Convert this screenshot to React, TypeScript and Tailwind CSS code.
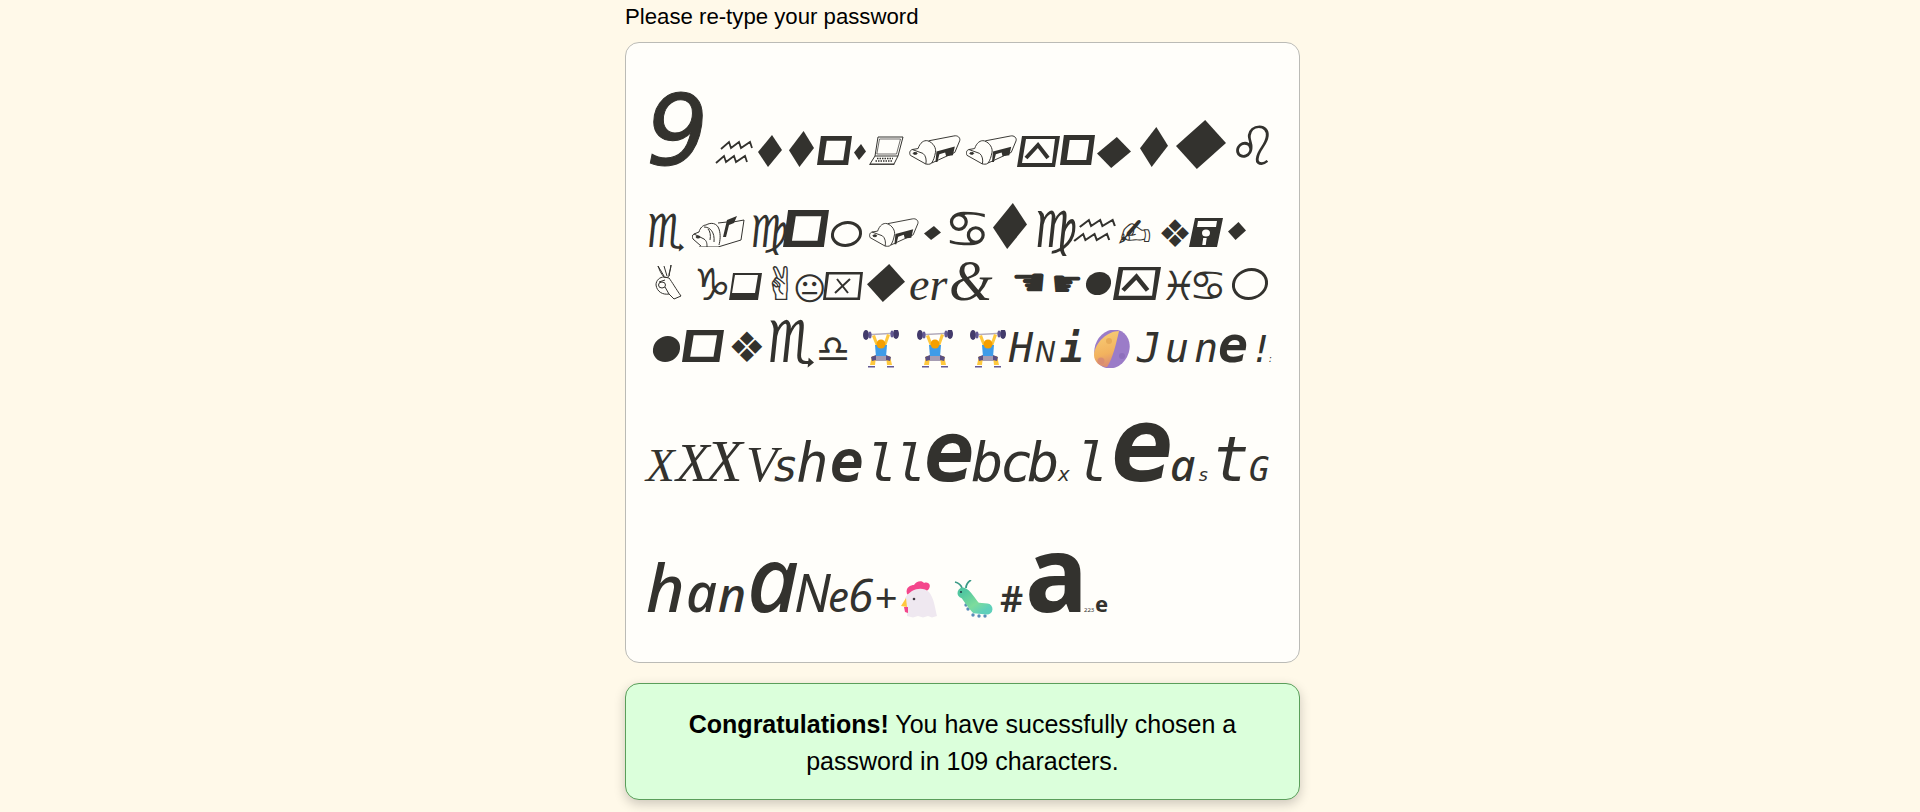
const INK = '#33322e';
const SYM = "font-['DejaVu_Sans']";
const MONO = "font-['DejaVu_Sans_Mono'] italic";
const NOTO = "font-['Noto_Sans'] italic";
const SERIF = "font-['Liberation_Serif'] italic";

type P = { className?: string; children?: React.ReactNode };

function Row({ className = '', children }: P) {
  return (
    <div className={`flex items-baseline ${className}`}>
      <span className="block w-0 h-full shrink-0" />
      {children}
    </div>
  );
}

function T({ className = '', children }: P) {
  return <span className={`block shrink-0 leading-none whitespace-pre ${className}`}>{children}</span>;
}

function Cell({ className = '', children }: P) {
  return <span className={`block shrink-0 leading-none ${className}`}>{children}</span>;
}

function Diamond({ className = '' }: P) {
  return (
    <svg viewBox="0 0 24 32" preserveAspectRatio="none" className={`inline-block align-baseline ${className}`}>
      <polygon points="14,0 24,15 10,32 0,17" fill={INK} />
    </svg>
  );
}

function Square({ className = '' }: P) {
  return (
    <svg viewBox="0 0 36 30" preserveAspectRatio="none" className={`inline-block align-baseline ${className}`}>
      <path fillRule="evenodd" fill={INK} d="M4 0H36L32 30H0ZM10 5L7 25H27L30 5Z" />
    </svg>
  );
}

function ShadowBox({ className = '' }: P) {
  return (
    <svg viewBox="0 0 33 27" preserveAspectRatio="none" className={`inline-block align-baseline ${className}`}>
      <path fillRule="evenodd" fill={INK} d="M4 0H33L29 27H0L1 21ZM6 2L3 20H26L29 2Z" />
    </svg>
  );
}

function XBox({ className = '' }: P) {
  return (
    <svg viewBox="0 0 40 28" preserveAspectRatio="none" className={`inline-block align-baseline ${className}`}>
      <path fillRule="evenodd" fill={INK} d="M3 0H40L37 28H0ZM6 2.500L3 25.500H34.500L37 2.500Z" />
      <path d="M14 7L25 21M27 7L12 21" stroke={INK} strokeWidth="2" fill="none" />
    </svg>
  );
}

function UpBox({ className = '' }: P) {
  return (
    <svg viewBox="0 0 43 31" preserveAspectRatio="none" className={`inline-block align-baseline ${className}`}>
      <path fillRule="evenodd" fill={INK} d="M5 0H43L38 31H0ZM9 3L5 27H35L38 3Z" />
      <path d="M9 22L21 9L31 22" fill="none" stroke={INK} strokeWidth="4" />
    </svg>
  );
}

function Aquarius({ className = '' }: P) {
  return (
    <svg viewBox="0 0 38 25" preserveAspectRatio="none" className={`inline-block align-baseline ${className}`} fill="none" stroke={INK} strokeWidth="1.800">
      <path d="M6 9L14 2L16 8L24 2L26 8L35 2L37 8" />
      <path d="M1 23L9 16L11 22L19 16L21 22L30 16L32 22" />
    </svg>
  );
}

function OkHand({ className = '' }: P) {
  return (
    <svg viewBox="0 0 27 35" className={`inline-block align-baseline ${className}`} fill="none" stroke={INK} strokeWidth="1">
      <path d="M3 1L9 11M9 1L12 11M16 0L14 11" />
      <path d="M3 1C4 4 6 9 9 12C12 13 15 12 14 9C15 5 16 3 16 0" />
      <path d="M1 20C1 15 5 12 9 12L14 13C17 17 21 24 26 31L19 34L14 29C8 30 2 27 1 20Z" />
      <ellipse cx="7" cy="20" rx="3.500" ry="3" />
      <path d="M10 22L14 29M4 17L10 15" />
    </svg>
  );
}

function Laptop({ className = '' }: P) {
  return (
    <svg viewBox="0 0 35 29" className={`inline-block align-baseline ${className}`} fill="none" stroke={INK} strokeWidth="1">
      <path d="M9 1H34L29 20H6Z" />
      <path d="M10.500 3H31.500L27.500 18H7.800Z" strokeWidth="0.700" />
      <path d="M6 20L1 28H25L29 20" />
      <path d="M0.700 28V28.700H25V28" />
      <path d="M8 22.500H24M6.500 25H23" strokeDasharray="1.500 1" strokeWidth="1.300" />
    </svg>
  );
}

function Mailbox({ className = '' }: P) {
  return (
    <svg viewBox="0 0 53 31" className={`inline-block align-baseline ${className}`} fill="none" stroke={INK} strokeWidth="1">
      <path d="M20 6L46 1C50 0 53 3 52 6L47 18L23 29" />
      <path d="M9 14C11 8 15 5 19 6C25 8 28 14 27 18C26 23 25 26 23 29C21 31 18 30 17 30" />
      <path d="M9 14L3 15C0 16 0 19 1 21L17 30" />
      <path d="M3 15L14 19C17 21 18 26 17 30" />
      <ellipse cx="6" cy="19" rx="2" ry="1" fill={INK} />
      <path d="M28 17L47 12L45 21L38 22L37 18L31 20L29 28L27 28Z" fill={INK} stroke="none" />
    </svg>
  );
}

function FlagMailbox({ className = '' }: P) {
  return (
    <svg viewBox="0 0 53 32" className={`inline-block align-baseline ${className}`} fill="none" stroke={INK} strokeWidth="1">
      <path d="M26 8L35 7M41 7L52 5L49 25L26 32H7" />
      <path d="M7 17C8 13 11 10 14 10C19 7 25 8 27 14C29 20 28 26 27 30" />
      <path d="M7 17L2 19C0 20 0 22 1 24L9 31" />
      <path d="M2 19L12 24C15 26 15 29 15 32" />
      <path d="M12 12C18 12 23 17 22 27M16 14C18 16 19 20 18 25" />
      <ellipse cx="6" cy="22" rx="2" ry="1" fill={INK} />
      <path d="M35 5L45 1L42 8L37 10L34 22L31 22Z" fill={INK} stroke="none" />
    </svg>
  );
}

function Floppy({ className = '' }: P) {
  return (
    <svg viewBox="0 0 34 29" className={`inline-block align-baseline ${className}`}>
      <path fillRule="evenodd" fill={INK} d="M6 0H34L28 29H0ZM9 3L8 9H27L28 3Z" />
      <ellipse cx="17" cy="15" rx="4" ry="3.500" fill="#fffefa" />
      <rect x="14" y="20" width="3.500" height="7" fill="#fffefa" transform="skewX(-8) translate(3 0)" />
    </svg>
  );
}

function Lifter({ className = '' }: P) {
  return (
    <svg viewBox="0 0 40 38" className={`inline-block align-baseline ${className}`}>
      <path d="M3 5L37 3" stroke="#b4acbc" strokeWidth="1.300" />
      <ellipse cx="5" cy="5" rx="3" ry="5" fill="#433b6b" />
      <ellipse cx="9" cy="5" rx="1.600" ry="3.500" fill="#635994" />
      <ellipse cx="35" cy="4" rx="3" ry="5" fill="#433b6b" />
      <ellipse cx="31" cy="4" rx="1.600" ry="3.500" fill="#635994" />
      <path d="M11 6L15 16L18 16L14 5ZM29 5L25 16L22 16L26 4Z" fill="#ffc83d" />
      <path d="M14 15H26L25 27H15Z" fill="#3f9ce8" />
      <circle cx="20" cy="14" r="4.500" fill="#f59f00" />
      <path d="M15 26H25L28 31H12Z" fill="#a69db3" />
      <path d="M11 26L15 26L14 35H9ZM29 26L25 26L26 35H31Z" fill="#ffc83d" />
      <path d="M10 27L15 25L15 30L11 31ZM30 27L25 25L25 30L29 31Z" fill="#5a4f82" />
      <path d="M7 36H14V37.500H7ZM26 36H33V37.500H26Z" fill="#635994" />
    </svg>
  );
}

function Moon({ className = '' }: P) {
  return (
    <svg viewBox="0 0 40 38" className={`inline-block align-baseline ${className}`}>
      <defs>
        <linearGradient id="moonGold" x1="0" y1="0" x2="0.200" y2="1">
          <stop offset="0" stopColor="#f8d078" />
          <stop offset="0.700" stopColor="#f2b25e" />
          <stop offset="1" stopColor="#dc8f72" />
        </linearGradient>
      </defs>
      <ellipse cx="20" cy="19" rx="17" ry="20" transform="rotate(28 20 19)" fill="#9b7cc8" />
      <path d="M27 1C16 1 3 12 2 25C2 32 8 37 15 37C21 28 24 14 27 1Z" fill="url(#moonGold)" />
      <circle cx="17" cy="11" r="3" fill="#e7ab58" />
      <circle cx="9" cy="31" r="3.500" fill="#d98d72" />
      <circle cx="30" cy="26" r="3" fill="#8e6fbc" />
    </svg>
  );
}

function Chicken({ className = '' }: P) {
  return (
    <svg viewBox="0 0 37 38" className={`inline-block align-baseline ${className}`}>
      <path d="M6 14C4 7 10 5 13 5C15 1 21 0 23 3C28 1 31 6 27 10L12 18Z" fill="#f4478c" />
      <path d="M4 18C10 8 22 6 28 12C33 18 34 28 36 36L31 37.500L27 36L22 37.500L17 36L12 37.500L6 36C6 30 5 24 4 18Z" fill="#efe8f0" />
      <path d="M5 18L0 26L6 27Z" fill="#ffc83d" />
      <path d="M3 27L7 27L7 33L4 32Z" fill="#f4478c" />
      <circle cx="13" cy="19" r="1.300" fill="#433b45" />
    </svg>
  );
}

function Caterpillar({ className = '' }: P) {
  return (
    <svg viewBox="0 0 39 38" className={`inline-block align-baseline ${className}`}>
      <defs>
        <linearGradient id="catBody" x1="0" y1="0" x2="1" y2="1">
          <stop offset="0" stopColor="#52c7a0" />
          <stop offset="0.600" stopColor="#7ddc9c" />
          <stop offset="1" stopColor="#5fd0ba" />
        </linearGradient>
      </defs>
      <path d="M1 2C5 3 7 5 8 8M17 0C14 2 12 5 12 8" stroke="#3a9a86" strokeWidth="1.800" fill="none" />
      <g fill="#5a8db8">
        <circle cx="12" cy="25" r="1.700" />
        <circle cx="14" cy="29" r="1.700" />
        <circle cx="19" cy="35" r="1.700" />
        <circle cx="25" cy="36" r="1.700" />
        <circle cx="31" cy="36" r="1.700" />
      </g>
      <path d="M9 13C13 14 16 22 22 28L33 29" stroke="url(#catBody)" strokeWidth="11" strokeLinecap="round" fill="none" />
      <circle cx="7" cy="12" r="1.100" fill="#24424a" />
    </svg>
  );
}

export default function App() {
  return (
    <div className={`min-h-screen bg-[#fff9e9] font-['Liberation_Sans',sans-serif] text-black`}>
      <div className="ml-[625px] w-[675px]">
        <div className="pt-[4px] h-[42px] text-[22.200px] leading-[26px]">Please re-type your password</div>

        <div className={`h-[621px] rounded-[14px] border border-[#bbbbb6] bg-[#fffefa] pl-[20px] text-[#33322e] ${SYM}`}>
          {/* row 1 */}
          <Row className="h-[122px]">
            <T className="w-[69px] text-[98px] italic [-webkit-text-stroke:1px_#33322e]">9</T>
            <Cell className="w-[43px]"><Aquarius className="w-[38px] h-[25px]" /></Cell>
            <Cell className="w-[31px]"><Diamond className="w-[24px] h-[32px] mb-[-2px]" /></Cell>
            <Cell className="w-[28px]"><Diamond className="w-[25px] h-[36px] mb-[-2px]" /></Cell>
            <Cell className="w-[37px]"><Square className="w-[35px] h-[29px]" /></Cell>
            <Cell className="w-[15px]"><Diamond className="w-[12px] h-[16px] mb-[5px]" /></Cell>
            <Cell className="w-[39px]"><Laptop className="w-[35px] h-[29px]" /></Cell>
            <Cell className="w-[58px]"><Mailbox className="w-[54px] h-[30px]" /></Cell>
            <Cell className="w-[51px]"><Mailbox className="w-[51px] h-[30px]" /></Cell>
            <Cell className="w-[43px]"><UpBox className="w-[43px] h-[31px] mb-[-2px]" /></Cell>
            <Cell className="w-[37px]"><Square className="w-[35px] h-[30px]" /></Cell>
            <Cell className="w-[43px]"><Diamond className="w-[34px] h-[31px] mb-[-3px]" /></Cell>
            <Cell className="w-[36px]"><Diamond className="w-[28px] h-[40px] mb-[-2px]" /></Cell>
            <Cell className="w-[53px]"><Diamond className="w-[50px] h-[49px] mb-[-4px]" /></Cell>
            <T className="text-[54px] -skew-x-6">♌</T>
          </Row>

          {/* row 2 */}
          <Row className="h-[82px]">
            <T className="w-[46px] text-[46px] font-bold -skew-x-6">♏</T>
            <Cell className="w-[57px]"><FlagMailbox className="w-[53px] h-[32px]" /></Cell>
            <T className="w-[34px] text-[44px] -skew-x-6">♍</T>
            <Cell className="w-[48px]"><Square className="w-[46px] h-[37px]" /></Cell>
            <Cell className="w-[37px]">
              <span className="inline-block w-[31px] h-[26px] rounded-[50%] border-[3px] border-[#33322e] -skew-x-6" />
            </Cell>
            <Cell className="w-[56px]"><Mailbox className="w-[52px] h-[29px]" /></Cell>
            <Cell className="w-[20px]"><Diamond className="w-[17px] h-[14px] mb-[7px]" /></Cell>
            <T className="w-[49px] text-[52px]">♋</T>
            <Cell className="w-[40px]"><Diamond className="w-[34px] h-[46px] mb-[-2px]" /></Cell>
            <T className="w-[40px] text-[50px] -skew-x-6">♍</T>
            <Cell className="w-[45px]"><Aquarius className="w-[43px] h-[25px] mb-[4px]" /></Cell>
            <T className="w-[40px] text-[40px]">✍</T>
            <T className="w-[31px] text-[38px]">❖</T>
            <Cell className="w-[39px]"><Floppy className="w-[34px] h-[29px]" /></Cell>
            <Cell><Diamond className="w-[18px] h-[18px] mb-[7px]" /></Cell>
          </Row>

          {/* row 3 */}
          <Row className="h-[53px]">
            <Cell className="w-[46px] pl-[9px]"><OkHand className="w-[27px] h-[35px]" /></Cell>
            <T className="w-[37px] text-[44px] -skew-x-6">♑</T>
            <Cell className="w-[36px]"><ShadowBox className="w-[33px] h-[27px]" /></Cell>
            <T className="w-[28px] -ml-[3px] mr-[3px] text-[46px]">✌</T>
            <T className="w-[30px] text-[32px]">😐</T>
            <Cell className="w-[44px]"><XBox className="w-[40px] h-[28px]" /></Cell>
            <Cell className="w-[42px]"><Diamond className="w-[38px] h-[38px] mb-[-2px]" /></Cell>
            <T className={`w-[40px] text-[46px] ${SERIF}`}>er</T>
            <T className={`w-[62px] text-[56px] ${SERIF}`}>&amp;</T>
            <T className="w-[40px] text-[40px] -translate-y-[4px]">☚</T>
            <T className="w-[35px] text-[36px] -translate-y-[4px]">☛</T>
            <Cell className="w-[27px]">
              <span className="inline-block w-[25px] h-[23px] rounded-[50%] bg-[#33322e] -skew-x-6 mb-[5px]" />
            </Cell>
            <Cell className="w-[48px]"><UpBox className="w-[48px] h-[33px]" /></Cell>
            <T className="w-[28px] text-[40px] -skew-x-6">♓</T>
            <T className="w-[43px] text-[42px]">♋</T>
            <Cell>
              <span className="inline-block w-[36px] h-[32px] rounded-[50%] border-[3px] border-[#33322e] -skew-x-6" />
            </Cell>
          </Row>

          {/* row 4 */}
          <Row className="h-[62px]">
            <Cell className="w-[36px] pl-[7px]">
              <span className="inline-block w-[27px] h-[26px] rounded-[50%] bg-[#33322e] -skew-x-6" />
            </Cell>
            <Cell className="w-[46px]"><Square className="w-[42px] h-[32px]" /></Cell>
            <T className="w-[38px] text-[42px]">❖</T>
            <T className="w-[50px] text-[58px] font-bold -skew-x-6">♏</T>
            <T className="w-[45px] text-[38px]">♎</T>
            <Cell className="w-[54px]"><Lifter className="w-[40px] h-[38px] mb-[-6px]" /></Cell>
            <Cell className="w-[53px]"><Lifter className="w-[40px] h-[38px] mb-[-6px]" /></Cell>
            <Cell className="w-[41px]"><Lifter className="w-[40px] h-[38px] mb-[-6px]" /></Cell>
            <T className={`w-[26px] text-[40px] ${MONO}`}>H</T>
            <T className="w-[25px] text-[28px] italic">N</T>
            <T className={`w-[32px] text-[40px] font-bold ${MONO}`}>i</T>
            <Cell className="w-[45px]"><Moon className="w-[40px] h-[38px] mb-[-6px]" /></Cell>
            <T className={`w-[28px] text-[40px] ${MONO}`}>J</T>
            <T className={`w-[29px] text-[40px] ${MONO}`}>u</T>
            <T className={`w-[24px] text-[40px] ${MONO}`}>n</T>
            <T className={`w-[32px] text-[50px] font-bold ${MONO}`}>e</T>
            <T className={`w-[18px] text-[38px] ${MONO}`}>!</T>
            <T className={`text-[8px] ${MONO}`}>:</T>
          </Row>

          {/* row 5 */}
          <Row className="h-[119px]">
            <T className={`w-[30px] text-[47px] ${SERIF}`}>X</T>
            <T className={`w-[30px] text-[55px] ${SERIF}`}>X</T>
            <T className={`w-[40px] text-[60px] ${SERIF}`}>X</T>
            <T className={`w-[26px] text-[51px] ${SERIF}`}>V</T>
            <T className={`w-[24px] text-[44px] ${MONO}`}>s</T>
            <T className={`w-[34px] text-[54px] ${MONO}`}>h</T>
            <T className={`w-[36px] text-[56px] font-bold ${MONO}`}>e</T>
            <T className={`w-[29px] text-[52px] ${MONO}`}>l</T>
            <T className={`w-[29px] text-[52px] ${MONO}`}>l</T>
            <T className={`w-[47px] text-[84px] font-bold ${MONO}`}>e</T>
            <T className={`w-[29px] text-[54px] ${MONO}`}>b</T>
            <T className={`w-[27px] text-[54px] ${MONO}`}>c</T>
            <T className={`w-[31px] text-[54px] ${MONO}`}>b</T>
            <T className={`w-[18px] text-[20px] ${MONO}`}>x</T>
            <T className={`w-[35px] text-[54px] ${MONO}`}>l</T>
            <T className={`w-[59px] text-[104px] font-bold ${MONO}`}>e</T>
            <T className={`w-[28px] text-[44px] font-medium ${NOTO}`}>a</T>
            <T className={`w-[14px] text-[18px] ${MONO}`}>s</T>
            <T className={`w-[37px] text-[62px] ${MONO}`}>t</T>
            <T className={`text-[34px] ${MONO}`}>G</T>
          </Row>

          {/* row 6 */}
          <Row className="h-[131px]">
            <T className={`w-[40px] text-[66px] font-medium ${NOTO}`}>h</T>
            <T className={`w-[32px] text-[54px] font-medium ${NOTO}`}>a</T>
            <T className={`w-[29px] text-[48px] font-medium ${NOTO}`}>n</T>
            <T className={`w-[47px] text-[90px] font-medium ${NOTO}`}>a</T>
            <T className={`w-[34px] text-[52px] ${NOTO}`}>N</T>
            <T className={`w-[20px] text-[42px] ${NOTO}`}>e</T>
            <T className={`w-[26px] text-[46px] ${NOTO}`}>6</T>
            <T className={`w-[27px] text-[40px] ${NOTO}`}>+</T>
            <Cell className="w-[53px]"><Chicken className="w-[37px] h-[38px] mb-[-6px]" /></Cell>
            <Cell className="w-[46px]"><Caterpillar className="w-[39px] h-[38px] mb-[-6px]" /></Cell>
            <T className="w-[25px] text-[36px] font-['Noto_Sans'] font-semibold">#</T>
            <T className="w-[59px] text-[105px] font-['Noto_Sans'] font-bold">a</T>
            <T className="w-[11px] text-[6px] font-['Noto_Sans']">223</T>
            <T className="text-[22px] font-['Noto_Sans'] font-bold">e</T>
          </Row>
        </div>

        <div className="mt-[20px] h-[117px] rounded-[14px] border border-[#5a9e5a] bg-[#dbffdb] shadow-[0_4px_12px_rgba(0,0,0,0.2)] pt-[22px] px-[40px] text-center text-[25px] leading-[37px]">
          <b>Congratulations!</b> You have sucessfully chosen a password in 109 characters.
        </div>
      </div>
    </div>
  );
}
